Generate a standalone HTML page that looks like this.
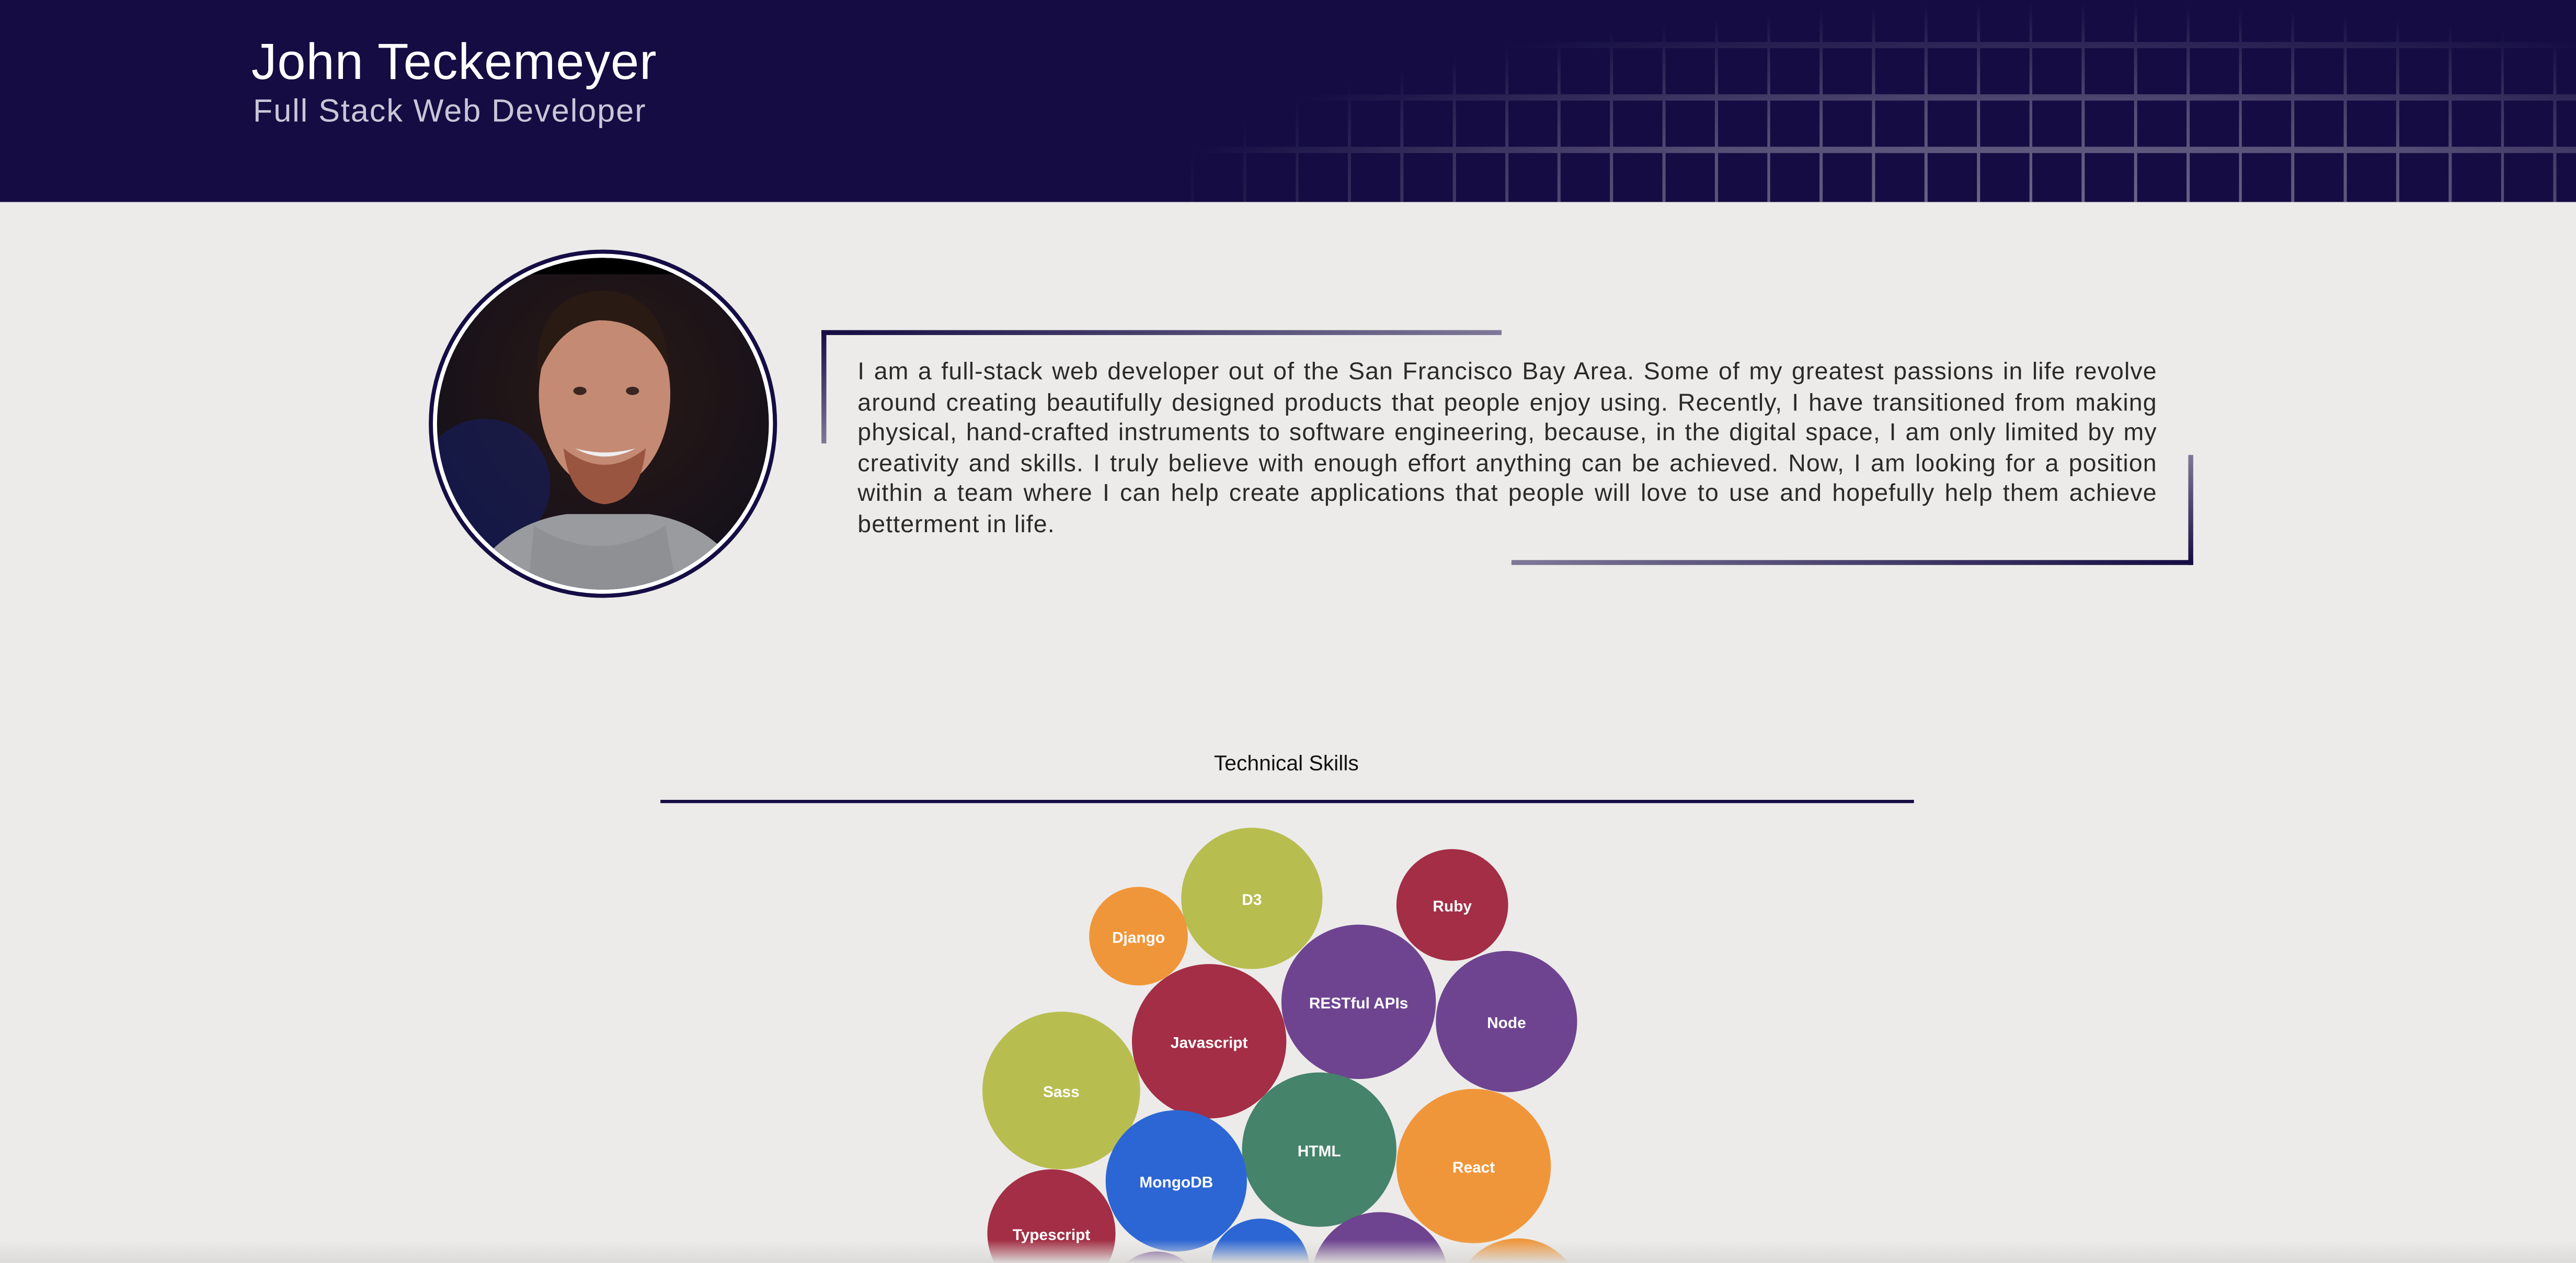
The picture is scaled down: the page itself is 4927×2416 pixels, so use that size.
<!DOCTYPE html>
<html><head><meta charset="utf-8"><style>
html,body{margin:0;padding:0;width:4927px;height:2416px;overflow:hidden;background:#ecebe9}
#w{position:absolute;left:0;top:0;width:1568px;height:769px;transform:scale(3.14222,3.1417);transform-origin:0 0;font-family:"Liberation Sans",sans-serif;overflow:hidden}
#hdr{position:absolute;left:0;top:0;width:1568px;height:123px;background:#140c42;overflow:hidden}
#grid{position:absolute;left:0;top:0;width:1568px;height:123px;
background:
repeating-linear-gradient(90deg,transparent 0,transparent 30px,#8a84a0 30px,#8a84a0 31.9px),
repeating-linear-gradient(180deg,transparent 0,transparent 28.1px,#8a84a0 28.1px,#8a84a0 31.9px);
background-position:-7px 0,0 -2.6px;
-webkit-mask-image:radial-gradient(ellipse 620px 150px at 1250px 135px,rgba(0,0,0,.8) 0,rgba(0,0,0,.55) 45%,transparent 90%);
mask-image:radial-gradient(ellipse 620px 150px at 1250px 135px,rgba(0,0,0,.8) 0,rgba(0,0,0,.55) 45%,transparent 90%)}
h1{position:absolute;left:153px;top:20px;margin:0;font-weight:300;font-size:31px;color:#fff;letter-spacing:.3px}
h2{position:absolute;left:154px;top:57px;margin:0;font-weight:300;font-size:19.5px;color:#c9c6d8;letter-spacing:.6px}
#bio{position:absolute;left:522px;top:218px;width:791px;font-size:14.8px;line-height:18.5px;color:#2a2a2a;text-align:justify;font-weight:300;letter-spacing:.35px}
.ln{position:absolute}
#ts{position:absolute;left:0;width:1566px;top:457px;text-align:center;font-size:13px;color:#111}
#hr{position:absolute;left:402px;top:486.5px;width:763px;height:2.5px;background:#140c42}
#shade{position:absolute;left:0;top:755px;width:1568px;height:14px;background:linear-gradient(#ecebe900,#dcdbd8)}
</style></head><body><div id="w">
<div id="hdr"><div id="grid"></div>
<h1>John Teckemeyer</h1><h2>Full Stack Web Developer</h2></div>

<svg style="position:absolute;left:255px;top:145px" width="230" height="230" viewBox="0 0 230 230">
<defs><clipPath id="c"><circle cx="112" cy="113" r="101"/></clipPath>
<radialGradient id="bg" cx="0.5" cy="0.4" r="0.7"><stop offset="0" stop-color="#2a1a14"/><stop offset=".7" stop-color="#16111a"/><stop offset="1" stop-color="#0e1238"/></radialGradient></defs>
<circle cx="112" cy="113" r="106" fill="#150d45"/>
<circle cx="112" cy="113" r="103.5" fill="#fff"/>
<g clip-path="url(#c)">
<rect x="0" y="0" width="230" height="230" fill="url(#bg)"/>
<rect x="0" y="0" width="230" height="22" fill="#000"/>
<ellipse cx="40" cy="150" rx="40" ry="40" fill="#142070" opacity=".5"/>
<path d="M20 230 Q40 175 90 168 L140 168 Q190 175 210 230Z" fill="#9a9b9e"/>
<path d="M70 175 Q110 200 150 175 L160 230 L65 230Z" fill="#8f9093"/>
<ellipse cx="113" cy="95" rx="40" ry="58" fill="#c48a74"/>
<path d="M72 85 Q70 35 110 32 Q150 32 152 80 Q140 50 110 50 Q85 52 72 85Z" fill="#2a1a14"/>
<path d="M88 128 Q113 148 138 128 Q135 160 113 162 Q92 160 88 128Z" fill="#9a5540"/>
<path d="M95 128 Q113 138 132 128 Q113 133 95 128Z" fill="#eee"/>
<ellipse cx="98" cy="93" rx="4" ry="2.5" fill="#3a2520"/><ellipse cx="130" cy="93" rx="4" ry="2.5" fill="#3a2520"/>
</g></svg>

<div class="ln" style="left:500px;top:201px;width:414px;height:3px;background:linear-gradient(90deg,#140c42,#7e7898)"></div>
<div class="ln" style="left:500px;top:201px;width:3px;height:69px;background:linear-gradient(#140c42,#7e7898)"></div>
<div class="ln" style="left:920px;top:341px;width:415px;height:3px;background:linear-gradient(90deg,#7e7898,#140c42)"></div>
<div class="ln" style="left:1332px;top:277px;width:3px;height:67px;background:linear-gradient(#7e7898,#140c42)"></div>
<div id="bio">I am a full-stack web developer out of the San Francisco Bay Area. Some of my greatest passions in life revolve around creating beautifully designed products that people enjoy using. Recently, I have transitioned from making physical, hand-crafted instruments to software engineering, because, in the digital space, I am only limited by my creativity and skills. I truly believe with enough effort anything can be achieved. Now, I am looking for a position within a team where I can help create applications that people will love to use and hopefully help them achieve betterment in life.</div>

<div id="ts">Technical Skills</div>
<div id="hr"></div>

<svg style="position:absolute;left:0;top:0" width="1568" height="769" font-family="Liberation Sans, sans-serif" font-weight="bold" font-size="9.5" fill="#fff" text-anchor="middle">
<circle cx="762" cy="547" r="43" fill="#b8bd50"/><text x="762" y="551">D3</text>
<circle cx="693" cy="570" r="30" fill="#f0963a"/><text x="693" y="574">Django</text>
<circle cx="884" cy="551" r="34" fill="#a32e45"/><text x="884" y="555">Ruby</text>
<circle cx="827" cy="610" r="47" fill="#6e4490"/><text x="827" y="614">RESTful APIs</text>
<circle cx="917" cy="622" r="43" fill="#6e4490"/><text x="917" y="626">Node</text>
<circle cx="736" cy="634" r="47" fill="#a32e45"/><text x="736" y="638">Javascript</text>
<circle cx="646" cy="664" r="48" fill="#b8bd50"/><text x="646" y="668">Sass</text>
<circle cx="803" cy="700" r="47" fill="#45836b"/><text x="803" y="704">HTML</text>
<circle cx="897" cy="710" r="47" fill="#f0963a"/><text x="897" y="714">React</text>
<circle cx="716" cy="719" r="43" fill="#2c66d4"/><text x="716" y="723">MongoDB</text>
<circle cx="640" cy="751" r="39" fill="#a32e45"/><text x="640" y="755">Typescript</text>
<circle cx="704" cy="790" r="28" fill="#6e4490"/>
<circle cx="767" cy="772" r="30" fill="#2c66d4"/><text x="767" y="776">PostgreSQL</text>
<circle cx="840" cy="780" r="42" fill="#6e4490"/>
<circle cx="924" cy="793" r="39" fill="#f0963a"/>
</svg>
<div id="shade"></div>
</div></body></html>
